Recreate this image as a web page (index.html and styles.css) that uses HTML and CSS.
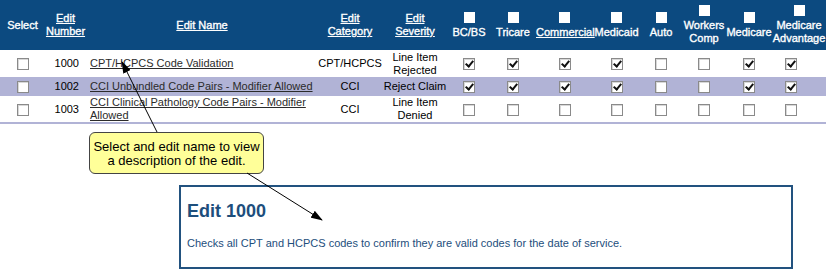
FILE: index.html
```html
<!DOCTYPE html>
<html lang="en">
<head>
    <meta charset="UTF-8">
    <title>Edits</title>
    <link rel="stylesheet" href="styles.css">
</head>
<body>
    <!-- Edits grid -->
    <table class="edits">
        <colgroup>
            <col style="width:45px">
            <col style="width:41px">
            <col style="width:232px">
            <col style="width:64px">
            <col style="width:66px">
            <col style="width:42px">
            <col style="width:46px">
            <col style="width:57px">
            <col style="width:47px">
            <col style="width:42px">
            <col style="width:44px">
            <col style="width:46px">
            <col style="width:54px">
        </colgroup>
        <thead>
            <tr>
                <th>Select</th>
                <th><a href="#">Edit<br>Number</a></th>
                <th><a href="#">Edit Name</a></th>
                <th><a href="#">Edit<br>Category</a></th>
                <th><a href="#">Edit<br>Severity</a></th>
                <th><span class="hbox"></span>BC/BS</th>
                <th><span class="hbox"></span>Tricare</th>
                <th><span class="hbox"></span><a href="#">Commercial</a></th>
                <th><span class="hbox"></span>Medicaid</th>
                <th><span class="hbox"></span>Auto</th>
                <th><span class="hbox"></span>Workers<br>Comp</th>
                <th><span class="hbox"></span>Medicare</th>
                <th><span class="hbox"></span>Medicare<br>Advantage</th>
            </tr>
        </thead>
        <tbody>
            <tr class="tall">
                <td><span class="cb"></span></td>
                <td class="num">1000</td>
                <td class="name"><a href="#">CPT/HCPCS Code Validation</a></td>
                <td>CPT/HCPCS</td>
                <td>Line Item<br>Rejected</td>
                <td><span class="cb on"></span></td>
                <td><span class="cb on"></span></td>
                <td><span class="cb on"></span></td>
                <td><span class="cb on"></span></td>
                <td><span class="cb"></span></td>
                <td><span class="cb"></span></td>
                <td><span class="cb on"></span></td>
                <td class="last"><span class="cb on"></span></td>
            </tr>
            <tr class="alt">
                <td><span class="cb"></span></td>
                <td class="num">1002</td>
                <td class="name"><a href="#">CCI Unbundled Code Pairs - Modifier Allowed</a></td>
                <td>CCI</td>
                <td>Reject Claim</td>
                <td><span class="cb on"></span></td>
                <td><span class="cb on"></span></td>
                <td><span class="cb on"></span></td>
                <td><span class="cb on"></span></td>
                <td><span class="cb"></span></td>
                <td><span class="cb"></span></td>
                <td><span class="cb on"></span></td>
                <td class="last"><span class="cb on"></span></td>
            </tr>
            <tr class="tall end">
                <td><span class="cb"></span></td>
                <td class="num">1003</td>
                <td class="name"><a href="#">CCI Clinical Pathology Code Pairs - Modifier Allowed</a></td>
                <td>CCI</td>
                <td>Line Item<br>Denied</td>
                <td><span class="cb"></span></td>
                <td><span class="cb"></span></td>
                <td><span class="cb"></span></td>
                <td><span class="cb"></span></td>
                <td><span class="cb"></span></td>
                <td><span class="cb"></span></td>
                <td><span class="cb"></span></td>
                <td class="last"><span class="cb"></span></td>
            </tr>
        </tbody>
    </table>

    <!-- Edit description -->
    <div class="detail">
        <h2>Edit 1000</h2>
        <p>Checks all CPT and HCPCS codes to confirm they are valid codes for the date of service.</p>
    </div>

    <!-- Callout -->
    <div class="callout">Select and edit name to view<br>a description of the edit.</div>

    <svg class="arrows" width="826" height="271" viewBox="0 0 826 271">
        <defs>
            <marker id="head" markerWidth="12" markerHeight="8" refX="11" refY="4" orient="auto" markerUnits="userSpaceOnUse">
                <path d="M0,0 L12,4 L0,8 Z" fill="#000"/>
            </marker>
        </defs>
        <line x1="157" y1="132" x2="122" y2="62" stroke="#000" stroke-width="1" marker-end="url(#head)"/>
        <line x1="247" y1="173" x2="322" y2="220" stroke="#000" stroke-width="1" marker-end="url(#head)"/>
    </svg>
</body>
</html>
```

FILE: styles.css
```css
/* General */
body {
    margin: 0;
    font-family: "Liberation Sans", Arial, sans-serif;
    color: #000;
    background: #fff;
    position: relative;
    width: 826px;
    height: 271px;
    overflow: hidden;
}

/* Grid */
.edits {
    width: 826px;
    table-layout: fixed;
    border-collapse: collapse;
}

    .edits th {
        height: 50px;
        padding: 0;
        background: #0c4a80;
        color: #fff;
        font-size: 11px;
        font-weight: normal;
        line-height: 13px;
        text-align: center;
        vertical-align: middle;
        -webkit-text-stroke: 0.35px #fff;
    }

    .edits th a {
        color: #fff;
    }

    .edits td {
        padding: 0;
        font-size: 11px;
        line-height: 13px;
        text-align: center;
        vertical-align: middle;
    }

    .edits tbody tr {
        height: 19px;
    }

        .edits tbody tr.tall {
            height: 26px;
        }

        .edits tbody tr:first-child {
            height: 27px;
        }

        .edits tbody tr.alt {
            background: #b1b3d6;
        }

        .edits tbody tr.end {
            border-bottom: 2px solid #b1b3d6;
        }

    .edits td.num {
        text-align: right;
        padding-right: 7px;
    }

    .edits td.name {
        text-align: left;
        padding-left: 4px;
    }

        .edits td.name a {
            color: #2b2b2b;
        }

    .edits td.last {
        padding-right: 16px;
    }

/* Checkboxes */
.hbox {
    display: block;
    width: 11px;
    height: 11px;
    margin: 0 auto 3px;
    background: #fff;
}

.cb {
    display: inline-block;
    position: relative;
    width: 10px;
    height: 10px;
    border: 1px solid #8a8a8a;
    background: #fff;
    box-shadow: inset 1px 1px 0 #d8d8d8;
    vertical-align: middle;
}

    .cb.on::after {
        content: "";
        position: absolute;
        left: 3px;
        top: 0;
        width: 3px;
        height: 6px;
        border: solid #111;
        border-width: 0 2px 2px 0;
        transform: rotate(40deg);
    }

/* Description box */
.detail {
    box-sizing: border-box;
    width: 614px;
    height: 84px;
    margin: 61px 0 0 179px;
    padding: 0 6px;
    border: 2px solid #22527f;
    color: #1d4e7c;
}

    .detail h2 {
        margin: 14px 0 0;
        font-size: 18px;
        line-height: 21px;
    }

    .detail p {
        margin: 15px 0 0;
        font-size: 11px;
        line-height: 13px;
    }

/* Callout with arrows */
.callout {
    position: absolute;
    left: 89px;
    top: 132px;
    box-sizing: border-box;
    width: 175px;
    height: 42px;
    padding-top: 7px;
    border: 1px solid #444;
    border-radius: 6px;
    background: #ffff99;
    font-size: 13px;
    line-height: 14px;
    text-align: center;
    z-index: 2;
}

.arrows {
    position: absolute;
    left: 0;
    top: 0;
    z-index: 3;
    pointer-events: none;
}
```
